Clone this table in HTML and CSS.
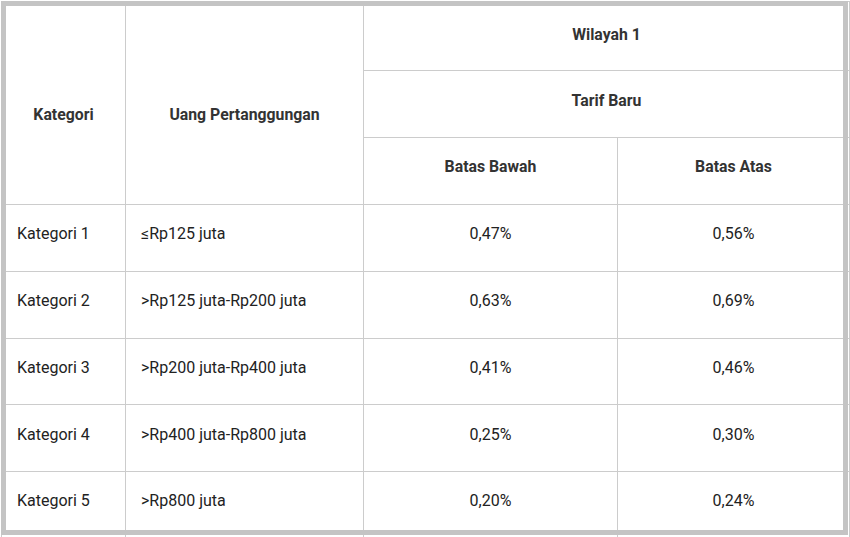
FILE: index.html
```html
<!DOCTYPE html>
<html lang="id">
<head>
<meta charset="utf-8">
<title>Tarif</title>
<link rel="stylesheet" href="styles.css">
</head>
<body>
<div class="wrap">
  <table class="tarif">
    <colgroup>
      <col class="c1"><col class="c2"><col class="c3"><col class="c4">
    </colgroup>
    <thead>
      <tr class="h1">
        <th rowspan="3" class="tall">Kategori</th>
        <th rowspan="3" class="tall">Uang Pertanggungan</th>
        <th colspan="2" class="top">Wilayah 1</th>
      </tr>
      <tr class="h2">
        <th colspan="2">Tarif Baru</th>
      </tr>
      <tr class="h3">
        <th>Batas Bawah</th>
        <th>Batas Atas</th>
      </tr>
    </thead>
    <tbody>
      <tr><td>Kategori 1</td><td>≤Rp125 juta</td><td class="num">0,47%</td><td class="num">0,56%</td></tr>
      <tr><td>Kategori 2</td><td>&gt;Rp125 juta-Rp200 juta</td><td class="num">0,63%</td><td class="num">0,69%</td></tr>
      <tr><td>Kategori 3</td><td>&gt;Rp200 juta-Rp400 juta</td><td class="num">0,41%</td><td class="num">0,46%</td></tr>
      <tr><td>Kategori 4</td><td>&gt;Rp400 juta-Rp800 juta</td><td class="num">0,25%</td><td class="num">0,30%</td></tr>
      <tr><td>Kategori 5</td><td>&gt;Rp800 juta</td><td class="num">0,20%</td><td class="num">0,24%</td></tr>
      <tr><td>&nbsp;</td><td></td><td></td><td></td></tr>
    </tbody>
  </table>
  <div class="frame"></div>
</div>
</body>
</html>
```

FILE: styles.css
```css
html, body {
  margin: 0;
  padding: 0;
  background: #ffffff;
  overflow: hidden;
}
body {
  font-family: Roboto, "Liberation Sans", Arial, sans-serif;
  color: #222222;
}
.wrap {
  position: relative;
  padding: 1px 0 0 1px;
}
.tarif {
  border-collapse: collapse;
  table-layout: fixed;
  width: 848px;
  font-size: 16px;
}
.c1 { width: 124px; }
.c2 { width: 238px; }
.c3 { width: 254px; }
.c4 { width: 232px; }
.tarif th,
.tarif td {
  border: 1px solid #cccccc;
  padding: 0 15px 8px;
  vertical-align: middle;
}
.tarif th {
  font-weight: bold;
  text-align: center;
  color: #333333;
  font-size: 15.8px;
}
.tarif th.tall {
  padding-top: 30px;
}
.tarif th.top {
  padding-bottom: 4px;
}
.tarif .h1 { height: 69px; }
.tarif .h2 { height: 67px; }
.tarif .h3 { height: 67px; }
.tarif .h3 th { padding-bottom: 10px; }
.tarif tbody tr { height: 66.75px; }
.tarif td { text-align: left; }
.tarif td.num { text-align: center; }
.frame {
  position: absolute;
  left: 1px;
  top: 1px;
  width: 837px;
  height: 524px;
  border: 5px solid #c4c4c4;
  pointer-events: none;
}
```
